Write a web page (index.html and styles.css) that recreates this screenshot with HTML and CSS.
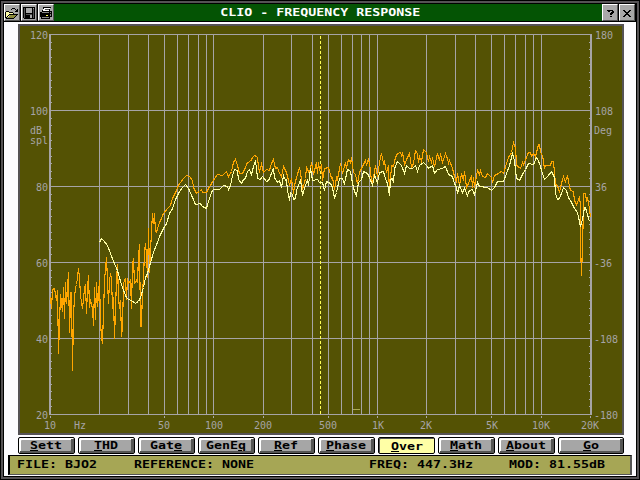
FILE: index.html
```
<!DOCTYPE html>
<html lang="en">
  <head>
    <meta charset="UTF-8" />
    <title>CLIO - Frequency Response</title>
    <link rel="stylesheet" href="styles.css" />
  </head>
  <body>
    <div class="window">
      <header class="titlebar">
        <button class="tool" aria-label="Open">
          <svg width="14" height="14" viewBox="0 0 14 14" shape-rendering="crispEdges">
            <path d="M1 6h3v1h4v1h-4v3h-3z" fill="#ffffaa" />
            <path d="M5 9h7l-3 3h-7z" fill="#8a8a3c" />
            <path d="M0 6h1v6h-1zM1 5h3v1h-3zM4 6h4v1h-4zM8 7h1v1h-1zM4 8h9v1h-9zM3 9h1v1h-1zM2 10h1v1h-1zM1 11h1v2h-1zM1 12h8v1h-8zM9 11h1v1h-1zM10 10h1v1h-1zM11 9h1v1h-1zM6 3h1v1h-1zM7 2h3v1h-3zM10 3h1v1h-1zM11 4h1v1h-1zM12 3h1v3h-1zM10 5h2v1h-2z" />
          </svg>
        </button>
        <button class="tool" aria-label="Save">
          <svg width="14" height="14" viewBox="0 0 14 14" shape-rendering="crispEdges">
            <path d="M1 1h12v12h-11l-1-1z" />
            <path d="M2 2h1v10h-1zM11 3h1v9h-1zM4 8h6v1h-6z" fill="#555" />
            <path d="M4 2h6v5h-6zM8 9h2v3h-2zM11 2h1v1h-1z" fill="#aaa" />
          </svg>
        </button>
        <button class="tool" aria-label="Print">
          <svg width="14" height="14" viewBox="0 0 14 14" shape-rendering="crispEdges">
            <path d="M4 1h8v1h-1v3h2v6h-2v2h-9v-2h-1v-5h2v-2h1z" />
            <path d="M5 2h6l-1 3h-6z" fill="#fff" />
            <path d="M6 3h4v1h-4z" fill="#555" />
            <path d="M3 6h7v1h-8zM11 6h1v1h-1zM11 8h1v2h-1zM3 11h7v1h-7z" fill="#888" />
            <path d="M7 9h2v1h-2z" fill="#ffff55" />
          </svg>
        </button>
        <h1 class="title"><span class="wide">CLIO - FREQUENCY RESPONSE</span></h1>
        <button class="tool" aria-label="Help">
          <svg width="14" height="14" viewBox="0 0 14 14" shape-rendering="crispEdges">
            <path d="M5 4h5v1h1v2h-1v1h-1v1h-2v-2h1v-1h1v-1h-2v1h-2v-1h-1v-1h1zM7 10h2v1h-2z" />
          </svg>
        </button>
        <button class="tool" aria-label="Close">
          <svg width="14" height="14" viewBox="0 0 14 14" shape-rendering="crispEdges">
            <path d="M3 4h2v1h1v1h2v-1h1v-1h2v1h-1v1h-1v1h-1v1h1v1h1v1h1v1h-2v-1h-1v-1h-2v1h-1v1h-2v-1h1v-1h1v-1h1v-1h-1v-1h-1v-1h-1z" />
          </svg>
        </button>
      </header>

      <main class="panel">
        <svg class="chart" width="602" height="407" viewBox="20 26 602 407">
          <g id="grid" class="grid"></g>
          <path class="cursor" d="M320.5 36V414" />
          <path class="mark" d="M353 409.5h7" />
          <polyline class="trace measured" points="50,297 51,308 52,289 54,288 56,300 57,290 58,353 60,294 62,311 63,287 64,318 65,282 66,303 68,272 69,332 70,299 70,292 71,292 72,370 73,315 74,297 75,287 76,284 77,277 78,268 79,278 80,295 82,308 84,288 85,284 86,313 87,287 88,275 89,307 90,299 92,308 93,325 94,287 95,319 96,282 97,306 99,280 100,320 101,338 102,343 104,280 106,257 107,280 108,303 109,280 110,273 111,278 112,308 113,297 114,338 115,308 116,280 117,264 118,297 119,308 120,300 121,336 122,326 123,283 125,278 126,299 127,278 128,283 130,280 131,308 132,263 133,258 134,283 136,280 137,282 138,256 139,244 140,326 141,326 142,288 143,280 144,250 145,243 146,255 147,277 148,228 149,272 150,250 152,213 153,223 154,213 155,231 156,232 158,225 160,220 163,213 167,208 170,205 172,198 175,192 178,185 180,182 183,178 186,175 189,176 192,180 193,187 196,193 199,191 201,189 202,192 206,192 208,188 211,183 215,177 217,174 222,175 226,171 228,176 231,171 233,162 235,159 237,165 239,173 242,173 245,167 247,162 250,161 252,157 254,155 257,157 258,167 259,171 261,164 263,172 266,169 269,170 271,163 273,159 275,168 277,167 279,173 281,176 283,166 286,172 288,180 289,185 291,178 293,193 294,185 296,177 299,167 300,172 302,189 305,178 306,167 309,173 311,162 313,174 316,162 317,173 318,162 319,169 321,165 322,180 324,168 328,167 331,178 332,177 334,189 336,177 337,179 340,163 342,173 345,162 346,168 348,159 350,162 351,157 353,172 355,174 357,183 359,172 361,168 365,160 366,165 368,158 370,169 371,182 372,183 375,165 377,176 379,162 381,153 383,163 384,161 386,172 388,165 389,194 391,165 393,166 395,157 397,153 400,152 401,155 402,152 404,164 407,157 409,153 411,167 413,163 415,150 417,153 418,162 419,156 421,161 423,149 426,152 428,161 429,156 431,162 432,157 434,166 437,153 439,160 440,153 442,162 445,153 447,158 448,163 449,160 452,168 454,176 456,182 457,173 459,185 461,173 463,180 464,171 466,187 468,183 471,175 472,187 473,177 474,187 476,175 477,170 479,174 480,170 482,176 485,177 487,173 491,177 492,182 494,175 498,173 501,171 503,173 506,163 508,157 511,152 513,142 515,147 516,164 517,166 520,168 522,162 523,164 526,157 528,152 530,152 531,156 533,153 535,156 537,148 538,144 539,144 540,152 542,155 544,168 545,165 550,165 551,161 553,161 555,184 557,185 559,192 561,183 563,176 565,181 567,175 568,181 570,190 573,191 574,200 576,204 579,197 580,205 580,243 581,275 582,247 583,207 583,193 585,193 586,201 587,197 589,208 590,217" />
          <polyline class="trace smoothed" points="99,242 101,238 103,240 107,245 110,253 113,261 117,270 120,281 123,290 126,297 128,299 131,300 135,303 138,301 140,297 143,287 145,277 147,273 150,262 153,252 157,242 159,236 163,228 166,223 169,213 172,208 175,199 178,193 181,188 185,184 188,188 192,197 195,204 200,203 202,206 206,208 208,201 211,192 213,189 219,189 223,185 227,186 228,189 230,185 232,175 234,169 237,170 238,179 241,183 243,179 245,178 247,171 249,169 251,174 253,166 255,161 256,168 257,178 260,179 262,176 266,181 268,180 271,173 273,168 274,177 277,182 279,180 281,187 283,175 285,180 286,179 287,190 289,200 290,192 292,194 293,199 295,198 296,190 298,185 300,179 302,195 303,191 305,185 307,180 308,185 310,168 312,180 317,179 319,182 322,182 324,190 326,181 330,183 332,187 334,198 336,192 338,183 339,178 342,178 344,183 347,169 350,171 352,183 354,191 356,195 358,182 361,179 363,171 367,173 369,177 372,185 374,175 377,182 379,172 383,171 385,178 387,183 389,195 390,179 392,178 393,182 394,168 397,161 401,165 404,173 406,165 409,168 412,168 415,165 417,171 419,165 423,162 427,166 428,168 432,165 434,173 437,169 442,168 445,166 448,174 452,176 454,183 456,187 457,193 459,185 462,192 464,188 467,195 469,190 472,189 474,194 477,182 479,186 487,187 491,190 494,187 497,181 503,181 506,173 509,165 512,153 514,160 516,178 519,180 522,174 525,169 528,163 533,164 536,157 537,158 539,163 542,173 544,179 547,176 551,171 552,173 554,177 555,193 557,199 559,198 562,190 563,187 566,190 568,197 571,202 574,208 577,212 580,226 582,219 584,207 585,207 589,221" />
          <g id="labels" class="labels"></g>
        </svg>
      </main>

      <nav class="menu">
        <button class="item"><span class="wide"><u>S</u>ett</span></button>
        <button class="item"><span class="wide"><u>T</u>HD</span></button>
        <button class="item"><span class="wide">Gat<u>e</u></span></button>
        <button class="item"><span class="wide">GenE<u>q</u></span></button>
        <button class="item"><span class="wide"><u>R</u>ef</span></button>
        <button class="item"><span class="wide"><u>P</u>hase</span></button>
        <button class="item active"><span class="wide"><u>O</u>ver</span></button>
        <button class="item"><span class="wide"><u>M</u>ath</span></button>
        <button class="item"><span class="wide"><u>A</u>bout</span></button>
        <button class="item last"><span class="wide"><u>G</u>o</span></button>
      </nav>

      <footer class="status">
        <div><span class="wide">FILE: BJO2</span></div>
        <div><span class="wide">REFERENCE: NONE</span></div>
        <div><span class="wide">FREQ: 447.3Hz</span></div>
        <div><span class="wide">MOD: 81.55dB</span></div>
      </footer>
    </div>

    <script src="chart.js"></script>
  </body>
</html>
```
FILE: styles.css
```
* {
  box-sizing: border-box;
}

body {
  margin: 0;
  width: 640px;
  height: 480px;
  overflow: hidden;
  background: #000;
  border: 1px solid #000;
  font: bold 10px/10px "DejaVu Sans Mono", monospace;
}

button {
  font: inherit;
  color: #000;
  padding: 0;
  margin: 0;
  border: none;
  border-radius: 0;
}

.window {
  height: 478px;
  border: 2px solid #555255;
  outline: 1px solid #000;
  outline-offset: -3px;
  padding: 1px;
  background: #fdfcff;
}

/* stretch the mono font to 8px cells */
.wide {
  display: inline-block;
  white-space: pre;
  transform: scaleX(1.329);
}

.titlebar {
  display: flex;
  gap: 1px;
  height: 18px;
  padding-right: 1px;
  background: #000;
  border-bottom: 1px solid #000;
}

.tool {
  width: 16px;
  height: 17px;
  background: #a8a8a8;
  border: 1px solid;
  border-color: #fff #555 #555 #fff;
}

.tool svg {
  display: block;
}

.title {
  flex: 1;
  margin: 0 -1px;
  padding: 4px 16px 0 0;
  font: inherit;
  text-align: center;
  color: #fff;
  background: #045404;
}

.panel {
  width: 606px;
  height: 411px;
  margin: 2px 0 2px 14px;
  border: 2px solid #555255;
  background: #545204;
}

.chart {
  display: block;
}

.grid {
  fill: #a6a4a6;
  shape-rendering: crispEdges;
}

.cursor {
  stroke: #ffff55;
  stroke-dasharray: 3 2;
  shape-rendering: crispEdges;
}

.mark {
  stroke: #aaaa55;
  shape-rendering: crispEdges;
}

.trace {
  fill: none;
  stroke-width: 1.1;
  transform: translate(0.5px, 0.5px);
  shape-rendering: crispEdges;
}

.measured {
  stroke: #ffa600;
}

.smoothed {
  stroke: #ffffa6;
}

.labels {
  fill: #a6a4a6;
  font: normal 10px "DejaVu Sans Mono", monospace;
}

.menu {
  display: flex;
  gap: 3px;
  margin: 0 0 1px 14px;
}

.item {
  width: 57px;
  height: 17px;
  background: #a6a6a6;
  border: 1px solid #000;
  border-radius: 2px;
  box-shadow: inset 1px 1px #fff, inset -3px -2px #555, inset 2px 2px #fff;
  padding-top: 1px;
}

.item u {
  text-decoration: underline;
  text-underline-offset: 1px;
}

.active {
  background: #ffffa6;
  box-shadow: inset 1px 1px #555;
  padding: 3px 0 0 2px;
}

.last {
  width: 66px;
}

.status {
  display: grid;
  grid-template-columns: 117px 235px 140px 1fr;
  width: 624px;
  height: 20px;
  margin-left: 4px;
  padding: 4px 0 0 7px;
  background: #a6a655;
  border: 2px solid;
  border-color: #000 #555 #555 #000;
  border-width: 1px 2px 1px 2px;
}

.status .wide {
  transform-origin: left;
}
```
FILE: chart.js
```
const svgNS = "http://www.w3.org/2000/svg";
const grid = document.getElementById("grid");
const labels = document.getElementById("labels");

const left = 50;
const right = 590;
const top_ = 34;
const bottom = 414;

function rect(x, y, w, h) {
  const el = document.createElementNS(svgNS, "rect");
  el.setAttribute("x", x);
  el.setAttribute("y", y);
  el.setAttribute("width", w);
  el.setAttribute("height", h);
  grid.appendChild(el);
}

function label(x, y, text) {
  const el = document.createElementNS(svgNS, "text");
  el.setAttribute("x", x);
  el.setAttribute("y", y);
  el.textContent = text;
  labels.appendChild(el);
}

// log scale, 10 Hz - 20 kHz
function freqToX(f) {
  return Math.round(left - 0.2 + ((right - left) * Math.log10(f / 10)) / Math.log10(2000));
}

for (let decade = 10; decade <= 10000; decade *= 10) {
  for (let i = 1; i < 10; i++) {
    const f = decade * i;
    if (f > 10 && f < 20000) {
      rect(freqToX(f), top_, 1, bottom - top_);
    }
    if (f > 10 && f <= 20000 && (i === 5 || i === 1 || (i === 2 && f > 20))) {
      rect(freqToX(f), bottom + 2, 1, 2);
    }
  }
}

for (let y = top_; y <= bottom; y += 76) {
  rect(left - 1, y, right - left + 3, 1);
}
rect(left - 1, top_, 2, bottom - top_ + 1);
rect(right, top_, 2, bottom - top_ + 1);
rect(left, bottom + 2, 1, 2);

// minor ticks on both value axes
for (let i = 1; i < 50; i++) {
  const y = Math.round(top_ + i * 7.6);
  rect(left + 1, y, 1, 1);
  rect(right - 1, y, 1, 1);
}

["120", "100", "80", "60", "40", "20"].forEach((text, i) => {
  label(48 - text.length * 6, 39 + i * 76, text);
});
["180", "108", "36", "-36", "-108", "-180"].forEach((text, i) => {
  label(text[0] === "-" ? 594 : 595, 39 + i * 76, text);
});
label(30, 134, "dB");
label(30, 144, "spl");
label(594, 134, "Deg");

label(44, 429, "10");
label(74, 429, "Hz");
label(158, 429, "50");
label(205, 429, "100");
label(254, 429, "200");
label(319, 429, "500");
label(372, 429, "1K");
label(420, 429, "2K");
label(486, 429, "5K");
label(532, 429, "10K");
label(581, 429, "20K");
```
